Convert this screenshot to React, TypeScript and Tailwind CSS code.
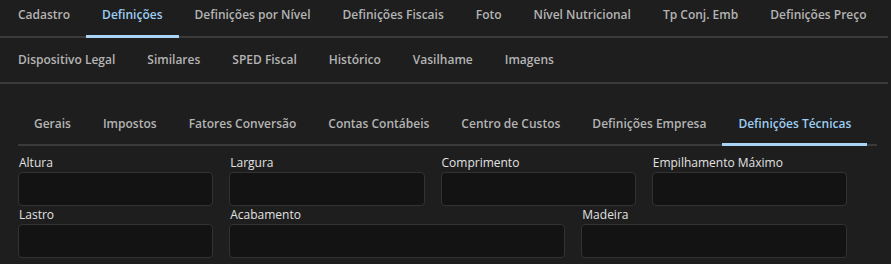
import React from "react";

const row1 = ["Cadastro", "Definições", "Definições por Nível", "Definições Fiscais", "Foto", "Nível Nutricional", "Tp Conj. Emb", "Definições Preço"];
const row2 = ["Dispositivo Legal", "Similares", "SPED Fiscal", "Histórico", "Vasilhame", "Imagens"];
const inner = ["Gerais", "Impostos", "Fatores Conversão", "Contas Contábeis", "Centro de Custos", "Definições Empresa", "Definições Técnicas"];

function Tab({ label, active, className }: { label: string; active?: boolean; className: string }) {
  return (
    <div className={`relative flex px-4 h-full whitespace-nowrap text-[12px] font-semibold leading-[18px] ${className} ${active ? "text-[#9dcdf2]" : "text-[#b4b4b4]"}`}>
      {label}
      {active && <div className="absolute left-0 right-0 bottom-[-2px] h-[3px] bg-[#a9d4f5]" />}
    </div>
  );
}

function Field({ label, span }: { label: string; span: string }) {
  return (
    <div className={`flex flex-col ${span}`}>
      <div className="h-[18px] leading-[18px] text-[12px] text-[#e2e2e2] pl-[1px]">{label}</div>
      <div className="h-[34px] rounded-[4px] border border-[#323232] bg-[#131313]" />
    </div>
  );
}

export default function App() {
  return (
    <div className="w-[891px] h-[264px] overflow-hidden bg-[#1e1e1e] font-['Open_Sans',sans-serif]">
      <div className="flex h-[38px] mr-[3px] pl-[2px] border-b-2 border-[#3a3a3a]">
        {row1.map((t, i) => (
          <Tab key={t} label={t} active={i === 1} className="pt-[6px]" />
        ))}
      </div>
      <div className="flex h-[46px] mr-[3px] pl-[2px] border-b-2 border-[#3a3a3a]">
        {row2.map((t) => (
          <Tab key={t} label={t} className="pt-[13px]" />
        ))}
      </div>
      <div className="pt-[20px] pl-[18px] pr-[14px]">
        <div className="flex h-[42px] border-b-2 border-[#3a3a3a]">
          {inner.map((t, i) => (
            <Tab key={t} label={t} active={i === 6} className="items-center" />
          ))}
        </div>
        <div className="mt-[8px] w-[829px] grid grid-cols-12 gap-x-4">
          <Field label="Altura" span="col-span-3" />
          <Field label="Largura" span="col-span-3" />
          <Field label="Comprimento" span="col-span-3" />
          <Field label="Empilhamento Máximo" span="col-span-3" />
          <Field label="Lastro" span="col-span-3" />
          <Field label="Acabamento" span="col-span-5" />
          <Field label="Madeira" span="col-span-4" />
        </div>
      </div>
    </div>
  );
}
